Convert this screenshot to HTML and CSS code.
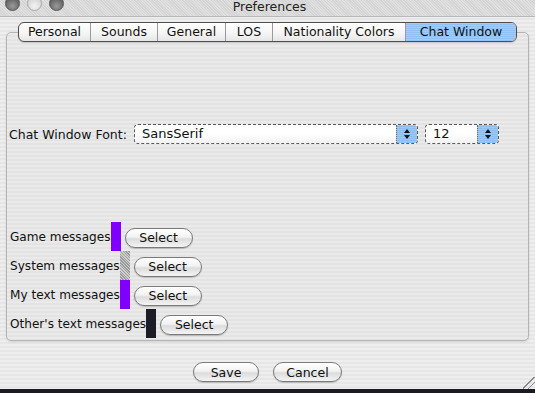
FILE: index.html
```html
<!DOCTYPE html>
<html lang="en">
<head>
    <meta charset="UTF-8">
    <title>Preferences</title>
    <link rel="stylesheet" href="styles.css">
</head>
<body>
    <div class="window">
        <div class="titlebar">
            <div class="lights">
                <span class="light"></span>
                <span class="light off"></span>
                <span class="light"></span>
            </div>
            <div class="title">Preferences</div>
        </div>

        <div class="tabs">
            <div class="tab">Personal</div>
            <div class="tab">Sounds</div>
            <div class="tab">General</div>
            <div class="tab">LOS</div>
            <div class="tab">Nationality Colors</div>
            <div class="tab selected">Chat Window</div>
        </div>

        <div class="panel">
            <div class="font-row">
                <span class="label">Chat Window Font:</span>
                <div class="combo font-combo">
                    <span class="combo-text">SansSerif</span>
                    <span class="arrows"><span class="up"></span><span class="down"></span></span>
                </div>
                <div class="combo size-combo">
                    <span class="combo-text">12</span>
                    <span class="arrows"><span class="up"></span><span class="down"></span></span>
                </div>
            </div>

            <div class="colors">
                <div class="color-row">
                    <span class="label">Game messages</span>
                    <span class="swatch purple"></span>
                    <button class="btn select">Select</button>
                </div>
                <div class="color-row">
                    <span class="label">System messages</span>
                    <span class="swatch gray"></span>
                    <button class="btn select">Select</button>
                </div>
                <div class="color-row">
                    <span class="label">My text messages</span>
                    <span class="swatch purple"></span>
                    <button class="btn select">Select</button>
                </div>
                <div class="color-row">
                    <span class="label">Other's text messages</span>
                    <span class="swatch dark"></span>
                    <button class="btn select">Select</button>
                </div>
            </div>
        </div>

        <div class="actions">
            <button class="btn save">Save</button>
            <button class="btn cancel">Cancel</button>
        </div>

        <div class="grip"></div>
    </div>
    <div class="dock"></div>
</body>
</html>
```

FILE: styles.css
```css
html, body {
    margin: 0;
    padding: 0;
}
body {
    width: 535px;
    height: 393px;
    overflow: hidden;
    font-family: "DejaVu Sans", "Liberation Sans", sans-serif;
    font-size: 12px;
    color: #111;
    background: #1b1a22;
}
.window {
    position: relative;
    height: 389px;
    background: repeating-linear-gradient(to bottom, #eeeeee 0, #eeeeee 2px, #e6e6e6 2px, #e6e6e6 4px);
}
.titlebar {
    height: 16px;
    display: flex;
    align-items: flex-start;
    background: repeating-linear-gradient(45deg, #d4d4d4 0, #d4d4d4 1px, #e0e0e0 1px, #e0e0e0 2px);
    border-bottom: 1px solid #b8b8b8;
    overflow: hidden;
}
.lights {
    display: flex;
    gap: 7px;
    padding-left: 5px;
    margin-top: -4px;
}
.light {
    width: 13px;
    height: 13px;
    border-radius: 50%;
    background: radial-gradient(circle at 50% 70%, #9a9a9a, #4a4a4a);
    border: 1px solid #555;
}
.light.off {
    background: radial-gradient(circle at 50% 70%, #f4f4f4, #c8c8c8);
    border-color: #aaa;
}
.title {
    flex: 1;
    text-align: center;
    font-size: 12.5px;
    line-height: 13px;
    margin-right: 60px;
    color: #222;
}
.tabs {
    position: relative;
    z-index: 1;
    display: flex;
    width: 497px;
    height: 18px;
    margin: 5px auto 0;
    border: 1px solid #4e4e4e;
    border-radius: 6px;
    background: linear-gradient(to bottom, #ffffff, #f4f4f4 60%, #e6e6e6);
    overflow: hidden;
    box-shadow: 0 1px 1px rgba(0,0,0,0.15);
}
.tab {
    line-height: 18px;
    text-align: center;
    font-size: 12.5px;
    border-right: 1px solid #9a9a9a;
}
.tab:nth-child(1) { width: 71px; }
.tab:nth-child(2) { width: 66px; }
.tab:nth-child(3) { width: 67px; }
.tab:nth-child(4) { width: 46px; }
.tab:nth-child(5) { width: 132px; }
.tab.selected {
    flex: 1;
    border-right: none;
    background: repeating-linear-gradient(to bottom, #a2cbf6 0, #a2cbf6 1px, #93c0f2 1px, #93c0f2 2px);
}
.panel {
    margin: -10px 6px 0 6px;
    height: 309px;
    box-sizing: border-box;
    border: 1px solid #b4b4b4;
    border-radius: 5px;
    box-shadow: 0 1px 2px rgba(0,0,0,0.12);
    background: repeating-linear-gradient(to bottom, #eaeaea 0, #eaeaea 2px, #e3e3e3 2px, #e3e3e3 4px);
    padding: 91px 0 0 2px;
}
.font-row {
    display: flex;
    align-items: center;
    height: 20px;
}
.font-row .label {
    width: 125px;
    font-size: 12.5px;
}
.combo {
    display: flex;
    height: 18px;
    border: 1px dashed #5a5a5a;
    border-radius: 4px;
    background: linear-gradient(to bottom, #ffffff 50%, #f2f2f2);
    overflow: hidden;
}
.font-combo {
    width: 282px;
}
.size-combo {
    width: 72px;
    margin-left: 7px;
}
.combo-text {
    flex: 1;
    padding-left: 7px;
    line-height: 18px;
    font-size: 13px;
}
.arrows {
    width: 20px;
    display: flex;
    flex-direction: column;
    align-items: center;
    justify-content: center;
    gap: 2px;
    background: repeating-linear-gradient(to bottom, #9cc8f6 0, #9cc8f6 1px, #8dbcf0 1px, #8dbcf0 2px);
    border-left: 1px dotted #6a6a6a;
}
.up {
    width: 0;
    height: 0;
    border-left: 3px solid transparent;
    border-right: 3px solid transparent;
    border-bottom: 4px solid #111;
}
.down {
    width: 0;
    height: 0;
    border-left: 3px solid transparent;
    border-right: 3px solid transparent;
    border-top: 4px solid #111;
}
.colors {
    margin-top: 78px;
}
.color-row {
    display: flex;
    align-items: center;
    height: 29px;
}
.color-row .label {
    padding-left: 1px;
    margin-top: 1px;
    font-size: 12.1px;
}
.swatch {
    width: 10px;
    height: 29px;
    margin-right: 4px;
}
.swatch.purple { background: #7f00ff; }
.swatch.gray {
    background: repeating-linear-gradient(45deg, #9a9a9a 0, #9a9a9a 1px, #cfcfcf 1px, #cfcfcf 2px);
}
.swatch.dark { background: #1d1b25; }
.btn {
    font-family: "DejaVu Sans", "Liberation Sans", sans-serif;
    font-size: 12.5px;
    color: #111;
    height: 20px;
    padding: 0;
    border: 1px solid #7a7a7a;
    border-radius: 10px;
    background: linear-gradient(to bottom, #ffffff, #f2f2f2 45%, #dcdcdc 55%, #f4f4f4);
    box-shadow: 0 1px 1px rgba(0,0,0,0.2);
}
.select {
    width: 68px;
    margin-top: 2px;
}
.actions {
    display: flex;
    justify-content: center;
    gap: 14px;
    margin-top: 21px;
}
.save { width: 66px; }
.cancel { width: 69px; }
.grip {
    position: absolute;
    right: 0;
    bottom: 0;
    width: 12px;
    height: 12px;
    background: linear-gradient(135deg, transparent 45%, #888 45%, #888 52%, transparent 52%, transparent 68%, #888 68%, #888 75%, transparent 75%);
}
.dock {
    height: 4px;
    background: #1b1a22;
}
```
